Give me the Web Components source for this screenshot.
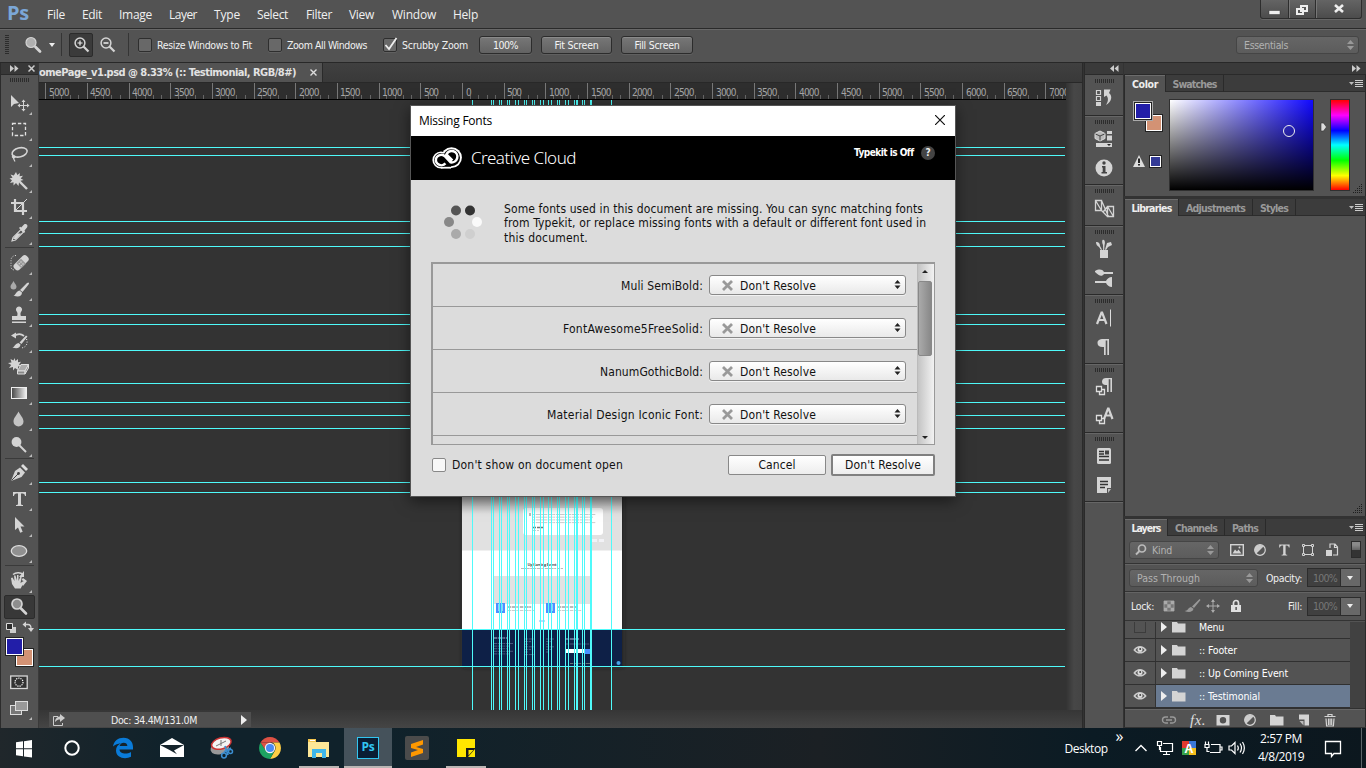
<!DOCTYPE html>
<html lang="en">
<head>
<meta charset="utf-8">
<title>Photoshop</title>
<style>
html,body{margin:0;height:100%;overflow:hidden;background:#333}
</style>
</head>
<body>
<ps-desktop></ps-desktop>
<script>
const TAHOMA = '"DejaVu Sans Condensed","DejaVu Sans",sans-serif';
const SEGOE = '"Open Sans","Noto Sans",sans-serif';

/* Registers an element whose shadow root is cloned from a template. */
function define(name, css, html, ready) {
  const t = document.createElement('template');
  const build = typeof html === 'function' ? html : () => html;
  customElements.define(name, class extends HTMLElement {
    connectedCallback() {
      if (this.shadowRoot) return;
      t.innerHTML = `<style>*{box-sizing:border-box}${css}</style>${build(this)}`;
      this.attachShadow({mode: 'open'}).append(t.content.cloneNode(true));
      if (ready) ready(this);
    }
  });
}

/* Flex cells: [left, width, content]; each cell's gap comes from the previous cell's end. */
function cells(list, start = 0) {
  let p = start;
  return list.map(([x, w, h, s = '']) => {
    const m = x - p; p = x + w;
    return `<div class="c" style="flex:none;display:flex;align-items:center;margin-left:${m}px;width:${w}px;${s}">${h}</div>`;
  }).join('');
}
const text = (s, w) => `<ui-text w="${w}">${s}</ui-text>`;
const icon = (n, w = 22, h = 22) => `<ps-icon name="${n}" w="${w}" h="${h}"></ps-icon>`;

const F = '#d4d4d4';
const sh = '<g fill="none" stroke="#d4d4d4" stroke-width="1.6">';
const ICONS = {
  move: `<path fill="${F}" d="M3 3v12l3-3 5-1z"/><path stroke="${F}" fill="none" d="M15.500 9v9M11 13.500h9"/><path fill="${F}" d="M15.500 7.500l2 2.500h-4zM15.500 19.500l2-2.500h-4zM9.500 13.500l2.500-2v4zM21.500 13.500l-2.500-2v4z"/>`,
  marquee: `<path fill="none" stroke="#e2e2e2" stroke-width="1.300" stroke-dasharray="3.400 2" d="M4.500 5.500h13v12h-13z"/>`,
  lasso: `${sh}<ellipse cx="11.500" cy="8.500" rx="7.700" ry="4.500" transform="rotate(-14 11 8)"/><path d="M5.500 11c-3 2 1 4 1.500 2s-3-1-1 2.500l1 2" stroke-width="1.200"/></g>`,
  wand: `<path fill="${F}" d="M8 2l1.300 3L12 3l-.5 3.300 3.500-.5-2.300 2.700L15.500 10l-3 .8L14 13.500l-3-1L10.500 16 8 13l-2.500 2.500v-3.200L2 13l2-2.700L1.500 8.500l3-.7L2.500 4.500l3.300 1z"/><path stroke="${F}" stroke-width="2.400" d="M12 12l7 7"/>`,
  crop: `<path fill="none" stroke="${F}" stroke-width="2.200" d="M7 3v12h12M3 7h12v12"/><path stroke="${F}" d="M8 14L19 3"/>`,
  eyedropper: `<path fill="none" stroke="${F}" stroke-width="1.200" d="M4 19l1-3.500 8-8 2.500 2.500-8 8z"/><path fill="${F}" d="M11 6l1.200-1.200 1 .7L16 2.500c2-1.500 4.500.7 3 3L16.500 8.500l.6 1.300L16 11zM9 11.500h4L8 17H5z"/>`,
  heal: `<path fill="none" stroke="#ddd" stroke-dasharray="1 1.500" d="M8 3.500c-3 0-5 2-5 5v6c0 2 1 3 3 3.500"/><rect x="4.500" y="7.200" width="17.500" height="7.400" rx="3" transform="rotate(-45 13 11)" fill="${F}"/><path fill="#999" d="M13 6.800l5 5-4.600 4.400-5-5z"/><path fill="#fff" d="M12.500 9.500h1v1h-1zM14.500 11.500h1v1h-1zM10.700 11.300h1v1h-1zM12.700 13.300h1v1h-1z"/>`,
  brush: `<path fill="#aaa" d="M5.500 3c1.500 3 3 4 3 5.500a3 3 0 0 1-6 0C2.500 7 4 6 5.500 3z"/><path fill="${F}" d="M20.500 4.500c1 1 .4 1.500 0 2L14.500 14l-2.500-2 7-7zM11.500 12.500l2.500 2c0 4-4 5-8.500 3 2.500-.5 2-4 6-5z"/>`,
  stamp: `<path fill="${F}" d="M11 2.500a3 3 0 0 1 2.300 5c-1 1.200-1 2.500-.5 4.500H18v4H4v-4h5.200c.5-2 .5-3.300-.5-4.500a3 3 0 0 1 2.300-5zM4 17.500h14v1.500H4z"/>`,
  historybrush: `<path fill="none" stroke="${F}" stroke-width="1.700" d="M6 6c3-2 7-2.500 10 0"/><path fill="${F}" d="M3 5.500l5-3v6zM18 5.500l1.500 1-6 7.500-2-1.500zM10.500 13l2 1.600c0 3.500-4 4.500-8 2.800 2.500-.5 2-3.500 6-4.400z"/><path fill="none" stroke="#eee" stroke-dasharray="1 1.600" d="M18.500 9c2 5-1 9-6 9"/>`,
  eraser: `<path fill="${F}" d="M6.500 2l1 3L10 3v3.200l3-.4L11 8.500l2.500 1.500-3.500.5L10 14l-3-2-2 2.500v-3.400L1 12l2.200-3L0 7l3.500-.5L2.500 3l3 1.500z"/><path fill="#aaa" stroke="#ddd" d="M13 8.500h7.500L17 15H9.500z"/><path fill="#888" stroke="#ddd" d="M20.500 8.500v3.500L17 18v-3zM9.500 15H17v3H9.500z"/>`,
  gradient: `<defs><linearGradient id="g"><stop stop-color="#444"/><stop offset="1" stop-color="#f4f4f4"/></linearGradient></defs><rect x="3.500" y="5.500" width="15" height="11" fill="url(#g)" stroke="#eee"/>`,
  drop: `<path fill="#c4c4c4" d="M10.500 3.500c2 4 5 6.500 5 10a5 5 0 0 1-10 0c0-3.500 3-6 5-10z"/>`,
  dodge: `<circle cx="8.500" cy="8" r="4.900" fill="${F}"/><path stroke="${F}" stroke-width="2" d="M11 11l7 7"/>`,
  pen: `<path fill="${F}" d="M3 19L7 9l5-3.500 5 5L13.500 15z"/><path fill="#ddd" d="M13 4l2-2 5 5-2 2z"/><circle cx="10.500" cy="11.500" r="1.400" fill="#444"/><path stroke="#444" d="M3.500 18.500l6.500-6.500"/>`,
  type: `<path fill="${F}" d="M5 4h13v4h-1c-.3-2-1-2.500-4-2.500v10c0 1.200.5 1.500 2 1.500v1H8v-1c1.500 0 2-.3 2-1.500v-10C7 5.500 6.300 6 6 8H5z"/>`,
  arrow: `<path fill="${F}" d="M7 3l9.500 9.500h-4l2.200 5.300-2.500 1-2.200-5.300L7 16z"/>`,
  ellipse: `<ellipse cx="11" cy="11" rx="7.700" ry="5.400" fill="#909090" stroke="#ddd" stroke-width="1.300"/>`,
  hand: `<path fill="${F}" d="M3 8l1.500-.5L6.500 11 6 5.500h1.500l1.500 5V5h1.500v6l2-4.500h1.300L12.500 13l2.200-1.500 1 1-3 6H7l-3-4.500z"/><path fill="none" stroke="${F}" stroke-width="1.500" d="M5 4.500c3-2.500 8-2 10 0"/><path fill="${F}" d="M16 1v6h-5zM15 8l4 3-4 5-1.500-2 2-3-2-1z"/>`,
  zoom: `<circle cx="9" cy="8" r="5" fill="#8e8e8e" stroke="${F}" stroke-width="1.700"/><path stroke="${F}" stroke-width="2.600" stroke-linecap="round" d="M13 12.500l5 5"/>`,
  loupe: `<circle cx="9" cy="8.500" r="5" fill="#b0b0b0" stroke="${F}" stroke-width="1.200"/><path stroke="${F}" stroke-width="2.800" stroke-linecap="round" d="M13.500 13l4.500 4.500"/>`,
  zoomin: `<circle cx="10" cy="9" r="4.900" fill="none" stroke="${F}" stroke-width="1.500"/><path stroke="#eee" stroke-width="1.200" d="M7.500 9h5M10 6.500v5"/><path stroke="${F}" stroke-width="2.200" d="M13.500 12.500l5 5"/>`,
  zoomout: `<circle cx="10" cy="9" r="4.900" fill="none" stroke="${F}" stroke-width="1.500"/><path stroke="#eee" stroke-width="1.500" d="M7.500 9h5"/><path stroke="${F}" stroke-width="2.200" d="M13.500 12.500l5 5"/>`,
  mini: `<rect x="5" y="7" width="6" height="6" fill="#ccc"/><path fill="#2d2d2d" stroke="#ddd" d="M1.500 3.500h6v6h-6z"/><path fill="none" stroke="${F}" stroke-width="1.300" d="M20 4.500h3c2 0 3 1.500 3 4"/><path fill="${F}" d="M17.500 4.500l3.500-3v6zM26 12l-3-4h6z"/>`,
  quickmask: `<rect x="2.700" y="5" width="16.500" height="12.500" fill="#333" stroke="#d8d8d8" stroke-width="1.300"/><circle cx="11" cy="11.200" r="4" fill="none" stroke="#fff" stroke-width="1.200" stroke-dasharray="1.200 1"/>`,
  screen: `<rect x="2.500" y="8.500" width="11" height="9" fill="#777" stroke="#ddd"/><rect x="7.500" y="4.500" width="12" height="9" fill="#999" stroke="#ddd"/>`,
  history: `<path fill="none" stroke="${F}" stroke-width="1.200" d="M3.500 3.500h4v4h-4zM3.500 9.500h4v4h-4z"/><path fill="${F}" d="M3 15h5v4H3zM11 2.500h6.500L16 6c4 3 2.500 9-3 12 2.500-4 2.500-7 .5-9.500L11 10z"/>`,
  props: `<path fill="#bbb" stroke="#ddd" d="M7 3l5 2.500v5L7 13l-5-2.500v-5z"/><path fill="none" stroke="#444" d="M2.500 6L7 8l4.500-2M7 8v4.500"/><path fill="${F}" d="M14 3h5v3h-5zM14 7.500h5v5h-5zM3 15h16v4H3z"/><path fill="#222" d="M14 16h4l-2 2z"/>`,
  info: `<circle cx="11" cy="11" r="8.500" fill="${F}"/><circle cx="11" cy="6" r="1.700" fill="#444"/><path fill="#444" d="M9 9h3.500v6H14v1.500H8.500V15H9.700v-4.500H9z"/>`,
  libs: `<path fill="none" stroke="${F}" stroke-width="1.300" d="M2.500 3.500h6v10h-6zM14.500 9.500h6v10h-6zM2.500 3.500l6 10M8.500 3.500l7 16M14.500 9.500l-4 5M14.500 9.500l6 10M8.500 13.500l6 6"/>`,
  brushes: `<path fill="${F}" d="M7 12h8v8H7zM9.500 2c2-1 3 2 2 5l-.3 5h-1l-.2-5c-1-2-1-4-.5-5zM3 4c2-.5 4 1 4 4l2 3.500-1 .5-2-3C4 8 3 6 3 4zM14 5l4-1 1 3-4 2-2 3-1-.5z"/>`,
  presets: `<path fill="${F}" d="M2 4c4-2 7-2 9 1h9v2h-9c-2 3-5 2-9-2zM2 14h11c1-2 3-4 6-4v10c-3 0-5-2-6-4H2z"/>`,
  chr: `<path fill="none" stroke="${F}" stroke-width="2.200" d="M4 17L8.500 5.500h.6L13.500 17M5.500 13h7"/><path stroke="#ddd" d="M17.500 2.500v17"/>`,
  para: `<path fill="${F}" d="M16 3v16h-1.700V4.500h-1.600V19H11v-8C7 11.500 4.500 10 4.500 7S7 3 10 3z"/>`,
  parast: `<path fill="${F}" d="M19 2v14h-1.600V3.300h-1.700V16H14V9c-3.500.5-5-1-5-3.500S11 2 13 2z"/><path fill="#555" stroke="#ddd" stroke-width="1.300" d="M6.500 13.500h5v5h-5z"/><path fill="#444" stroke="#ddd" stroke-width="1.300" d="M3.500 10.500h5v5h-5z"/>`,
  chrst: `<path fill="none" stroke="${F}" stroke-width="2.200" d="M11 14l4-10.500h.6L19.500 14M12 10.500h7"/><path fill="#555" stroke="#ddd" stroke-width="1.300" d="M6.500 13.500h5v5h-5z"/><path fill="#444" stroke="#ddd" stroke-width="1.300" d="M3.500 10.500h5v5h-5z"/>`,
  comps: `<rect x="4" y="3" width="14" height="16" rx="1.500" fill="${F}"/><path stroke="#333" stroke-width="1.500" d="M6 6.500h5M6 9h5M6 11.500h10M6 15h10"/><path fill="#444" d="M12 5.500h4v4h-4z"/>`,
  notes: `<path fill="${F}" d="M4 3h14v11h-4v5H4z"/><path fill="#bbb" d="M15 15h3l-3 4z"/><path stroke="#333" stroke-width="1.300" d="M7 7.500h8M7 10.500h8M7 13.500h5"/>`,
  image: `<rect x="4.700" y="5.700" width="12.600" height="10.600" fill="#555" stroke="${F}" stroke-width="1.400"/><path fill="${F}" d="M6.500 14.500l2.500-4 2 2 1.500-2 3 4z"/><circle cx="13.500" cy="8.500" r="1" fill="${F}"/>`,
  adjust: `<circle cx="11" cy="11" r="5.300" fill="#555" stroke="${F}" stroke-width="1.200"/><path fill="#ccc" d="M7.200 14.800A5.300 5.300 0 0 1 14.800 7.200z"/>`,
  shape: `<path fill="none" stroke="${F}" d="M7 6.500h8M7 15.500h8M6.500 8v6M15.500 8v6"/><path fill="#555" stroke="${F}" d="M5.500 5.500h2v2h-2zM14.500 5.500h2v2h-2zM5.500 14.500h2v2h-2zM14.500 14.500h2v2h-2z"/>`,
  smart: `<path fill="none" stroke="${F}" stroke-width="1.200" d="M9 9V5h5l2.500 3v8H12M13.500 5v3.500h3"/><path fill="${F}" d="M5 11h6v6H5z"/>`,
  checker: `<path fill="#777" stroke="#999" d="M6 6h10v10H6z"/><path fill="#aaa" d="M6 6h3.300v3.300H6zM12.700 6H16v3.300h-3.300zM9.300 9.300h3.400v3.400H9.300zM6 12.700h3.300V16H6zM12.700 12.700H16V16h-3.300z"/>`,
  lbrush: `<path fill="#999" d="M18.500 4l1 1-6.500 8-2-1.500zM10 12l2.500 1.800c-.5 3.500-5 3.700-9 2.200C7 16 6.500 13 10 12z"/>`,
  lmove: `<path stroke="#aaa" d="M11 5v12M5 11h12"/><path fill="#aaa" d="M11 4l2 3H9zM11 18l2-3H9zM4 11l3-2v4zM18 11l-3-2v4z"/>`,
  lock: `<path fill="none" stroke="#e0e0e0" stroke-width="1.700" d="M8.500 11V8a2.500 2.500 0 0 1 5 0v3"/><path fill="#e0e0e0" d="M6 10h10v7H6z"/><path fill="#333" d="M10.500 12h1.200v3h-1.200z"/>`,
  link: `<path fill="none" stroke="#999" stroke-width="1.400" d="M10 8H7.500a3 3 0 0 0 0 6H10M12 8h2.500a3 3 0 0 1 0 6H12M8 11h6"/>`,
  mask: `<path fill="${F}" fill-rule="evenodd" d="M4.500 6h13v10.500h-13zM11 8a3.200 3.200 0 1 0 0 6.400A3.200 3.200 0 1 0 11 8z"/>`,
  folder: `<path fill="${F}" d="M4 6h5l1 1.500h7.500v9H4z"/>`,
  newl: `<path fill="${F}" d="M6 5.500h10v11h-4.500v-6H6z"/><path fill="#bbb" d="M6.500 12h4v4.500z"/>`,
  trash: `<path fill="none" stroke="${F}" stroke-width="1.200" d="M5.500 7.500h11M9 7V5.500h4V7M7 9.500l.6 7.500h6.800L15 9.500M9.500 9.500V16M11.100 9.500V16M12.700 9.500V16"/>`,
  eye: `<path fill="none" stroke="#ccc" stroke-width="1.500" d="M5.300 11c3-4.500 8.400-4.500 11.400 0-3 3.800-8.400 3.800-11.400 0z"/><circle cx="11" cy="10.500" r="2.500" fill="#ddd"/><circle cx="11.200" cy="10" r="1" fill="#444"/>`,
  share: `<path fill="none" stroke="#ccc" d="M10 6.500H5.500v9h9V13"/><path fill="#ccc" d="M12 4l5 4-5 4V9.500c-2 0-3 .5-5 2.500 0-3 2-5.500 5-5.500z"/>`,
  cc: `<g fill="#fff"><circle cx="19.500" cy="10.600" r="10.400"/><circle cx="9" cy="13" r="8.600"/><path d="M9 10h10v11.600H9z"/></g><g fill="#000"><circle cx="19.500" cy="10.800" r="8.500"/><circle cx="9" cy="13" r="6.900"/><path d="M9 10h10v9.800H9z"/></g><path fill="none" stroke="#fff" stroke-width="2.500" d="M13.400 16.400a5.400 5.200 0 1 1-.8-7.400l6 6.300a5.700 5.700 0 1 0-4.200-7.800l6 6"/>`,
  win: `<path fill="#fff" d="M3 5.300l7-1v7H3zM11 4.200l8-1.200v8.300h-8zM3 12.300h7v7l-7-1zM11 12.300h8v8.300l-8-1.200z"/>`,
  ring: `<circle cx="11" cy="11" r="6.700" fill="none" stroke="#fff" stroke-width="2"/>`,
  edge: `<path fill="#0a7bd8" d="M1 9.500C2 4 6 .8 11.500.8 18 .8 21 5.500 21 10v2.500H7.500c.2 4 6.500 5.500 11.500 2.500v4.700c-5.500 3-15 1.500-15-6.200 0-3.500 2-6 5-7.200C6 7 3 7.500 1 9.500zM7.600 9h7.800c0-4.500-7-4.500-7.800 0z"/>`,
  mail: `<path fill="#fff" d="M0 8L12 1l12 7v12H0z"/><path fill="#15242c" d="M0 8h24l-10 5.500 3 3.700-7-4z"/>`,
  snip: `<ellipse cx="10" cy="11" rx="9.500" ry="6" transform="rotate(-15 11 8)" fill="#999"/><ellipse cx="12.500" cy="6.500" rx="10" ry="5.500" transform="rotate(-15 12 7)" fill="#f4f4f4" stroke="#c33" stroke-width="1.500"/><path stroke="#777" d="M7 9l10-5M12 3v6"/><path fill="none" stroke="#3b8ed0" stroke-width="1.800" d="M16 9l3 9M22 11l-7 4"/><circle cx="15" cy="18.500" r="2.400" fill="none" stroke="#3b8ed0" stroke-width="1.500"/><circle cx="21.500" cy="14.500" r="2" fill="none" stroke="#3b8ed0" stroke-width="1.500"/>`,
  chrome: `<path fill="#dd5144" d="M1.500 5.500A11 11 0 0 1 20.500 5.500H11z"/><path fill="#ffce45" d="M20.500 5.500A11 11 0 0 1 11 22l5-8.500c1.500-3 0-7-3-8z"/><path fill="#1da362" d="M1.500 5.500A11 11 0 0 0 11 22l4.500-8C12 17 8 15 6.500 13z"/><path fill="#dd5144" d="M1.500 5.500L6.500 13 7 8l4-2.500z"/><circle cx="11" cy="11" r="5.200" fill="#f4f4f4"/><circle cx="11" cy="11" r="4" fill="#4a8af4"/>`,
  explorer: `<path fill="#f5c64f" d="M0 2h8v3h13v4H0z"/><path fill="#fde797" d="M0 5h21v15H0z"/><path fill="#3fb6ea" d="M4 21v-9h14v9h-4v-5H8v5z"/><path fill="#fff" d="M2 3h5v1H2z"/>`,
  sublime: `<rect width="24" height="24" rx="2" fill="#4b4b4b"/><path fill="#ff9800" d="M6 8l12-4v4.500L11 11l7 2v4L6 21v-4.500l7-2.500-7-2z"/>`,
  sticky: `<path fill="#ffe600" d="M1 2h18v18H1z"/><path fill="#17191c" d="M10 11h9v1l-7 8h-2z"/><path fill="#ffe600" d="M12.500 13h5l-5 5.500z"/>`,
  chev: `<path fill="none" stroke="#fff" stroke-width="1.400" d="M5.500 14l5.500-5.500 5.500 5.500"/>`,
  pc: `<path fill="none" stroke="#fff" stroke-width="1.200" d="M9 6.500h9.500v8H6.500V10M9 17.500h7M12.500 15v2.500M3.500 4.500h4v4h-4zM5.500 9v4"/>`,
  ime: `<path fill="#e2382e" d="M4 4h7v7H4z"/><path fill="#3a78d8" d="M11 4h7v7h-7z"/><path fill="#36a04a" d="M4 11h7v7H4z"/><path fill="#f4bd1c" d="M11 11h7v7h-7z"/><text x="11" y="16" font-family="Liberation Sans" font-weight="bold" font-size="13" fill="#fff" text-anchor="middle">A</text>`,
  batt: `<path fill="none" stroke="#fff" stroke-width="1.200" d="M9 7.500h9v8H8M18.500 10h1.500v3h-1.500M3.500 4.500v3M6.500 4.500v3M3 7.500h4v3H3zM5 10.500v4h2.500"/>`,
  sound: `<path fill="none" stroke="#fff" stroke-width="1.200" d="M3 9h2.500L9 5.500v11L5.500 13H3zM11.500 8.500c1 1.500 1 3.500 0 5M14 6.500c2 3 2 6 0 9M16.500 5c2.500 4 2.500 8 0 12"/>`,
  notif: `<path fill="none" stroke="#fff" stroke-width="1.300" d="M3.500 4.500h15v12H12l-2.500 3v-3h-6z"/>`,
  warn: `<path fill="#ddd" d="M11 5l6 12H5z"/><path stroke="#222" stroke-width="2" d="M11 8.500v4.500M11 14v1.500"/>`,
  search: `<circle cx="12" cy="9.500" r="3.500" fill="none" stroke="#bbb" stroke-width="1.700"/><path stroke="#bbb" stroke-width="2" d="M9.500 12L6 15.500"/>`,
  menu: `<path fill="#bbb" d="M4 9h5l-2.500 3z"/><path stroke="#ccc" stroke-width="1" d="M10 7.500h8M10 9.500h8M10 11.500h8M10 13.500h8"/>`,
  resize: `<path stroke="#1d1d1d" stroke-width="1" stroke-dasharray="1 1" d="M9 1.500h1M7 3.500h3M5 5.500h5M3 7.500h7M1 9.500h9"/>`
};
define('ps-icon', ':host{display:block;flex:none}svg{display:block;overflow:visible}', e =>
  `<svg width="${e.getAttribute('w') || 22}" height="${e.getAttribute('h') || 22}" viewBox="0 0 ${e.getAttribute('w') || 22} ${e.getAttribute('h') || 22}">${ICONS[e.getAttribute('name')] || ''}</svg>`);

define('ps-grip', ':host{display:block;height:4px;width:19px;background:repeating-linear-gradient(90deg,#2c2c2c 0 1px,#535353 1px 2px)}', '');
define('ps-check', `:host{display:block;width:14px;height:14px;border:1px solid #2e2e2e;border-radius:2px;background:#686868;box-shadow:0 1px #606060}svg{display:block;overflow:visible}`,
  e => e.hasAttribute('on') ? '<svg width="12" height="12"><path fill="none" stroke="#eee" stroke-width="1.800" d="M1.500 6l3.500 4L12.500-1"/></svg>' : '');
define('ps-button', `:host{display:flex;align-items:center;justify-content:center;width:100%;height:18px;border:1px solid #2c2c2c;border-radius:3px;background:linear-gradient(#777,#626262);box-shadow:inset 0 1px #8a8a8a,0 1px #606060;color:#f4f4f4}`, '<slot></slot>');
define('ps-select', `:host{display:flex;align-items:center;width:100%;height:18px;padding:0 4px 0 7px;border:1px solid #454545;border-radius:3px;background:linear-gradient(#666,#5c5c5c);color:#b2b2b2}svg{margin-left:auto}`,
  '<slot></slot><svg width="7" height="10"><path fill="#999" d="M3.500 0L7 4H0zM3.500 10L7 6H0z"/></svg>');

/* ---------- top bars ---------- */
define('ps-menubar', `:host{display:flex;height:28px;background:#535353;color:#f0f0f0;font:12px ${SEGOE};align-items:center}
.logo{font:bold 20px ${SEGOE};color:#7ba7d7;height:28px;line-height:26px}
.win{align-self:flex-start;height:19px;border:1px solid #2d2d2d;border-top:0;border-radius:0 0 3px 3px;background:linear-gradient(#646464,#4c4c4c);box-shadow:0 1px #666}
svg{display:block}`, () => cells([
  [7, 24, `<div class="logo">${text('Ps', 22)}</div>`],
  [47, 20, text('File', 18)], [82, 22, text('Edit', 20)], [119, 34, text('Image', 33)], [169, 30, text('Layer', 28)],
  [214, 28, text('Type', 26)], [257, 34, text('Select', 31)], [306, 28, text('Filter', 26)], [349, 28, text('View', 25)],
  [392, 46, text('Window', 44)], [453, 30, text('Help', 25)]]) +
  `<div class="win" style="margin-left:auto;margin-right:4px;width:102px"><svg width="100" height="18"><path stroke="#2d2d2d" d="M27.500 0v18M54.500 0v18"/><path stroke="#777" d="M28.500 0v18M55.500 0v18"/><path fill="#eee" stroke="#333" stroke-width=".5" d="M8 10.500h11v4H8z"/><path fill="none" stroke="#eee" stroke-width="2" d="M40 6h6v5h-6zM36 9h6v5h-6z"/><path stroke="#eee" stroke-width="2.600" d="M74 5l8 7M82 5l-8 7"/></svg></div>`);

define('ps-options', `:host{display:flex;height:35px;background:#535353;border-top:1px solid #2a2a2a;box-shadow:inset 0 1px #686868;align-items:center;font:10.500px ${TAHOMA};color:#f0f0f0;padding-bottom:3px}
.vg{width:4px;height:20px;background:repeating-linear-gradient(#2c2c2c 0 1px,#535353 1px 2px)}.d{width:1px;height:23px;background:#353535}
.on{width:24px;height:24px;border:1px solid #2b2b2b;border-radius:2px;background:#3b3b3b}`, () => cells([
  [5, 4, '<div class="vg"></div>'], [22, 22, icon('loupe')], [49, 8, '<svg width="7" height="4"><path fill="#eee" d="M0 0h6L3 4z"/></svg>'], [61, 1, '<div class="d"></div>'],
  [69, 24, `<div class="on">${icon('zoomin')}</div>`], [96, 22, icon('zoomout')], [128, 1, '<div class="d"></div>'],
  [138, 14, '<ps-check></ps-check>'], [157, 98, text('Resize Windows to Fit', 95)],
  [268, 14, '<ps-check></ps-check>'], [287, 84, text('Zoom All Windows', 80)],
  [383, 14, '<ps-check on></ps-check>'], [402, 70, text('Scrubby Zoom', 66)],
  [479, 53, `<ps-button>${text('100%', 25)}</ps-button>`], [541, 71, `<ps-button>${text('Fit Screen', 44)}</ps-button>`], [621, 72, `<ps-button>${text('Fill Screen', 45)}</ps-button>`],
  [1236, 123, `<ps-select>${text('Essentials', 44)}</ps-select>`]]));

/* ---------- toolbox ---------- */
define('ps-tool', `:host{display:grid;place-items:center;position:relative;width:31px;height:26px;flex:none}
:host([on]) .b{background:#383838;border-color:#2c2c2c}.b{width:31px;height:24px;border:1px solid transparent;border-radius:2px;display:grid;place-items:center}
:host([more])::after{content:"";position:absolute;right:3px;bottom:1px;border:solid transparent;border-width:0 0 3.500px 3.500px;border-bottom-color:#bbb}`,
  e => `<div class="b">${icon(e.getAttribute('name'))}</div>`);
define('ps-toolbox', `:host{display:flex;flex-direction:column;width:39px;background:#535353;border-left:1px solid #2c2c2c;border-right:1px solid #3a3a3a;padding-right:1px;align-items:center;flex:none;box-sizing:border-box}
.h{align-self:stretch;height:12px;background:#383838;display:flex;justify-content:space-between;align-items:center;padding:0 3px 0 9px;border-bottom:1px solid #2a2a2a;flex:none;margin-right:-1px}
ps-grip{margin:3px 0 8px;flex:none}.d{width:29px;height:1px;background:#3a3a3a;margin:1px 0 1.500px;flex:none}
.colors{position:relative;width:29px;height:30px;margin:0 0 2px;flex:none}.sw{position:absolute;width:19px;height:19px;border:1px solid #222;box-shadow:inset 0 0 0 1px #fff}
.f{left:0;top:0;background:#221ea8}.bk{right:0;bottom:0;background:#d39274}`,
  () => {
    const t = (n, m = true) => `<ps-tool name="${n}"${m ? ' more' : ''}></ps-tool>`;
    return `<div class="h"><svg width="9" height="7"><path fill="#ccc" d="M0 0l4 3.500L0 7zM4.500 0l4 3.500-4 3.500z"/></svg><svg width="7" height="7"><path stroke="#ccc" stroke-width="1.500" d="M.5.5l6 6M6.500.5l-6 6"/></svg></div><ps-grip></ps-grip>`
      + ['move', 'marquee', 'lasso', 'wand', 'crop', 'eyedropper'].map(n => t(n)).join('') + '<div class="d"></div>'
      + ['heal', 'brush', 'stamp', 'historybrush', 'eraser', 'gradient', 'drop', 'dodge'].map(n => t(n)).join('') + '<div class="d" style="margin:.5px 0 1px"></div>'
      + ['pen', 'type', 'arrow', 'ellipse'].map(n => t(n)).join('') + '<div class="d"></div>' + t('hand')
      + `<ps-tool name="zoom" on></ps-tool>${icon('mini', 29, 17)}<div class="colors"><div class="sw bk"></div><div class="sw f"></div></div>`
      + t('quickmask', false) + t('screen');
  });

/* ---------- document window ---------- */
define('ps-ruler', `:host{display:block;height:17px;background:#2e2e2e;border-bottom:1px solid #000}svg{display:block}text{font:10px ${TAHOMA};fill:#a5a5a5}`, () => {
  let s = '', m = '';
  for (let k = -10; k <= 14; k++) {
    const x = Math.floor(423 + k * 41.667 + .4);
    s += `M${x}.500 0v16`;
    for (let j = 1; j < 5; j++) m += `M${Math.floor(423 + (k + j / 5) * 41.667)}.500 12v4`;
  }
  let t = '';
  for (let k = -10; k <= 14; k++) {
    const v = String(Math.abs(k) * 500), w = v.length === 4 ? 20.5 : v.length === 3 ? 15 : 5.5;
    t += `<text x="${Math.floor(423 + k * 41.667) + 4}" y="13" textLength="${w}">${v}</text>`;
  }
  return `<svg width="1027" height="16"><path stroke="#777" d="${s}"/><path stroke="#666" d="${m}"/>${t}</svg>`;
});
define('ps-canvas', ':host{display:block;height:610px;background:#333;overflow:hidden}svg{display:block}', () => {
  const H = [147, 155, 221, 233, 246, 314, 324, 350, 383, 402, 415, 428, 482, 492, 629, 666];
  const V = [472, 491, 493, 499, 501, 507, 509, 515, 518, 524, 526, 532, 534, 540, 543, 548, 551, 557, 559, 565, 568, 574, 576, 577, 582, 584, 590, 591, 611];
  const lines = (x, y, w, n, step, c) => Array.from({length: n}, (_, i) => `<path stroke="${c}" stroke-dasharray="3 .7 5 .5 2 .8" d="M${x} ${y + i * step}h${w - (i % 3) * 3}"/>`).join('');
  return `<svg width="1027" height="610" viewBox="39 100 1027 610">
<defs><filter id="b" x="-10%" y="-10%" width="120%" height="120%"><feGaussianBlur stdDeviation="2"/></filter>
<linearGradient id="s" x2="0" y2="1"><stop stop-color="#000" stop-opacity=".25"/><stop offset="1" stop-color="#000" stop-opacity="0"/></linearGradient></defs>
<path fill="#222" filter="url(#b)" d="M463 400h160v267H463z"/>
<path fill="#fff" d="M462 400h160v266H462z"/><path fill="#e1e1e1" d="M462 400h160v150.500H462z"/>
<rect x="523" y="508" width="80" height="27" rx="3" fill="#fff"/>${lines(532, 514.5, 64, 4, 2.7, '#ccc')}
<path stroke="#777" stroke-width="1.300" stroke-dasharray="3 1" d="M533 527.500h12"/><path stroke="#ccc" stroke-dasharray="3 1" d="M533 530.500h6"/><path stroke="#bbb" stroke-width="2" d="M530 513v3"/>
<path stroke="#f2f2f6" stroke-width="3" d="M592 540.500h5M599 540.500h5"/>
<text x="527.500" y="565.500" textLength="29" font-family="Open Sans" font-weight="bold" font-size="4" fill="#555">Up Coming Event</text>${lines(521, 568.5, 42, 1, 2, '#bbb')}
<path fill="#e2e2e2" d="M494 576h97v28h-97z"/><path fill="#4a92ff" d="M496 603h9v10h-9zM546 603h9v10h-9z"/>
<path stroke="#9cc6ff" d="M498.500 604v7M502.500 604v7M548.500 604v7M552.500 604v7"/>
${lines(508, 607, 24, 1, 1, '#777')}${lines(508, 610.5, 27, 1, 1, '#ccc')}${lines(558, 607, 18, 1, 1, '#777')}${lines(558, 610.5, 24, 1, 1, '#ccc')}
<path fill="#b8dcff" d="M539 620h6v2h-6z"/>
<path fill="#0e2047" d="M462 629h160v37H462z"/>
${lines(494, 638, 13, 1, 1, '#aab8d8')}${lines(494, 643.5, 19, 5, 2.6, '#47557a')}${lines(525, 639, 9, 7, 2.6, '#47557a')}${lines(546, 639, 8, 6, 2.6, '#47557a')}${lines(566, 639, 13, 1, 2, '#aab8d8')}${lines(566, 644, 25, 1, 2, '#47557a')}
<path fill="#fff" d="M566 649h19v4h-19z"/><path fill="#4a92ff" d="M585 649h6v5h-6z"/>${lines(570, 663.5, 20, 1, 1, '#677')}<circle cx="618.500" cy="663" r="2" fill="#46a4e8"/>
<path fill="url(#s)" d="M462 496h160v18H462z"/>
<path stroke="#4ffafa" d="${H.map(y => `M39 ${y}.500h1026`).join('')}${V.map(x => `M${x}.500 100v610`).join('')}"/></svg>`;
});
define('ps-document', `:host{display:flex;flex-direction:column;width:1044px;box-sizing:border-box;background:#3a3a3a;border-right:1px solid #2a2a2a;font:10.500px ${TAHOMA};color:#f0f0f0;flex:none}
.tabs{height:20px;display:flex;border-bottom:1px solid #282828;background:linear-gradient(#404040,#393939);flex:none}
.tab{width:284px;background:#535353;border-right:1px solid #2a2a2a;display:flex;align-items:center;overflow:hidden;font-weight:bold;font-size:11px;color:#e2e2e2}
.tab svg{margin-left:14px}.area{display:flex;height:627px}.view{width:1027px;overflow:hidden;flex:none}.sb{flex:1;background:linear-gradient(90deg,#333,#474747 50%,#444)}
.status{height:18px;display:flex;background:linear-gradient(#363636,#454545);padding:2px 0 1px 10px}.box{width:202px;background:#4f4f4f;display:flex;align-items:center}`,
  () => `<div class="tabs"><div class="tab">${text('omePage_v1.psd @ 8.33% (:: Testimonial, RGB/8#)', 257)}<svg width="7" height="7"><path stroke="#ddd" stroke-width="1.400" d="M.5.5l6 6M6.500.5l-6 6"/></svg></div></div>
<div class="area"><div class="view"><ps-ruler></ps-ruler><ps-canvas></ps-canvas></div><div class="sb"></div></div>
<div class="status"><div class="box">${cells([[-1, 18, icon('share', 18, 20)], [62, 90, text('Doc: 34.4M/131.0M', 86)], [192, 8, '<svg width="7" height="10"><path fill="#eee" d="M0 0l6 5-6 5z"/></svg>']])}</div></div>`);

/* ---------- right-hand dock ---------- */
define('ps-strip', `:host{display:flex;flex-direction:column;width:39px;box-sizing:border-box;background:#535353;border-left:1px solid #2a2a2a;margin-left:1px;flex:none}
.g{border-bottom:1px solid #2a2a2a;box-shadow:0 1px #666;padding:4px 0 0;display:flex;flex-direction:column;align-items:center;flex:none}
.g ps-icon{margin-top:7px}.g ps-grip+ps-icon{margin-top:4px}.h{height:12px;background:#3a3a3a;border-bottom:1px solid #2a2a2a;display:flex;justify-content:flex-end;padding:2px 4px 0 0;flex:none}`, () => {
  const g = (h, ...n) => `<div class="g" style="height:${h}px"><ps-grip></ps-grip>${n.map(i => icon(i)).join('')}</div>`;
  return '<div class="h"><svg width="9" height="7"><path fill="#ccc" d="M4 0L0 3.500 4 7zM8.500 0l-4 3.500 4 3.500z"/></svg></div>' +
    g(41, 'history') + g(69, 'props', 'info') + g(41, 'libs') + g(69, 'brushes', 'presets') + g(69, 'chr', 'para') + g(69, 'parast', 'chrst') + g(69, 'comps', 'notes');
});
define('ps-panel', `:host{display:flex;flex-direction:column;background:#535353;border:1px solid #2a2a2a;border-width:0 1px;flex:none}
.t{display:flex;height:17px;background:#3c3c3c;flex:none;font:bold 10.500px ${TAHOMA};color:#999;border-bottom:1px solid #2c2c2c}
.t .c{height:17px;justify-content:center;border-right:1px solid #2a2a2a}.t .c:first-child{background:#535353;color:#eee;box-shadow:inset 0 1px #6c6c6c}
.m{margin-left:auto;align-self:center}`, e => {
  const tabs = JSON.parse(e.getAttribute('tabs'));
  return `<div class="t">${tabs.map(([n, w, tw]) => `<div class="c" style="display:flex;align-items:center;width:${w}px">${text(n, tw)}</div>`).join('')}<div class="m">${icon('menu', 20, 20)}</div></div><slot></slot>`;
});
define('ps-color', `:host{display:flex;box-sizing:border-box;height:104px;padding:7px 0 0 8px}
.l{width:36px;padding-top:2px}.s{position:relative;width:30px;height:31px}.a,.z{position:absolute;width:20px;height:20px;border:1px solid #aaa;box-shadow:inset 0 0 0 1px #222,inset 0 0 0 2px #fff}
.a{left:0;top:0;background:#221ea8}.z{right:0;bottom:0;width:18px;height:18px;border-color:#222;box-shadow:inset 0 0 0 1px #fff;background:#d39274}
.w{display:flex;margin:18px 0 0 -5px;align-items:center;height:22px}.w i{width:13px;height:13px;margin-left:1px;flex:none;border:1px solid #222;box-shadow:inset 0 0 0 1px #fff;background:#333a96}
.f{width:145px;height:92px;border:1px solid #303030;background:linear-gradient(transparent,#000),linear-gradient(90deg,#fff,#1109ff);position:relative;flex:none}
.f b{position:absolute;left:113px;top:25px;width:12px;height:12px;border:1.500px solid #eee;border-radius:50%}
.k{margin:23px 0 0 6px;width:8px;height:10px}.h{margin-left:2px;width:20px;height:92px;border:1px solid #303030;background:linear-gradient(red,#f0f 17%,#00f 34%,#0ff 50%,#0f0 67%,#ff0 84%,red)}
.r{margin:auto 2px 2px auto}`,
  `<div class="l"><div class="s"><div class="z"></div><div class="a"></div></div><div class="w">${icon('warn', 20, 22)}<i></i></div></div><div class="f"><b></b></div><svg class="k"><path fill="#ddd" stroke="#333" stroke-width=".6" d="M1 1h2.500l3 4-3 4H1z"/></svg><div class="h"></div><div class="r">${icon('resize', 11, 11)}</div>`);
define('ps-layer', `:host{display:flex;box-sizing:border-box;width:225px;height:23px;border-bottom:1px solid #303030;background:#535353;flex:none;font:10.500px ${TAHOMA};color:#fff}
.e{width:31px;border-right:1px solid #333;display:grid;place-items:center;flex:none}.n{flex:1;display:flex;align-items:center;padding-left:5px}:host([sel]) .n{background:#6a7b92}
.n svg{flex:none}.box{width:12px;height:12px;border:1px solid #3c3c3c}ps-icon{margin:0 4px 0 1px}.e ps-icon{margin:0}.n ui-text{margin-left:5px}`,
  e => `<div class="e">${e.hasAttribute('off') ? '<div class="box"></div>' : icon('eye')}</div><div class="n"><svg width="6" height="10"><path fill="#eee" d="M0 0l6 5-6 5z"/></svg>${icon('folder')}${text(e.getAttribute('label'), e.getAttribute('tw'))}</div>`);
define('ps-layers', `:host{display:flex;flex-direction:column;box-sizing:border-box;height:191px;font:10.500px ${TAHOMA};color:#eee}
.r{display:flex;align-items:center;border-bottom:1px solid #333;box-shadow:0 1px #646464;flex:none}
.tg{width:10px;height:17px;border:1px solid #2b2b2b;background:linear-gradient(#8a8a8a 0 20%,#666 50%,#333 50%)}
.in{width:54px;height:19px;border:1px solid #2c2c2c;background:#404040;color:#777;display:flex;align-items:center;padding-left:5px}
.in i{margin-left:auto;width:20px;height:17px;border-left:1px solid #2c2c2c;background:#686868;display:grid;place-items:center}
.list{height:86px;background:#414141;overflow:hidden;display:flex;flex-direction:column;justify-content:flex-end;margin-top:1px;flex:none}
.bar{display:flex;align-items:center;border-top:1px solid #303030;box-shadow:inset 0 1px #666;flex:1}.fx{font:italic 15px "Liberation Serif",serif;color:#ddd}`, () => {
  const input = `<div class="in">${text('100%', 24)}<i><svg width="7" height="4"><path fill="#eee" d="M0 0h6L3 4z"/></svg></i></div>`;
  return `<div class="r" style="height:28px">${cells([[4, 90, `<ps-select style="padding-left:0;box-sizing:border-box">${icon('search')}${text('Kind', 20)}</ps-select>`], [101, 22, icon('image')], [124, 22, icon('adjust')], [148, 22, icon('type', 22, 22), 'transform:scale(.8)'], [172, 22, icon('shape')], [196, 22, icon('smart')], [226, 10, '<div class="tg"></div>']])}</div>
<div class="r" style="height:28px">${cells([[4, 129, `<ps-select>${text('Pass Through', 63)}</ps-select>`], [141, 38, text('Opacity:', 36)], [182, 54, input]])}</div>
<div class="r" style="height:29px;box-shadow:none">${cells([[6, 25, text('Lock:', 23)], [33, 22, icon('checker')], [56, 22, icon('lbrush')], [77, 22, icon('lmove')], [100, 22, icon('lock')], [163, 16, text('Fill:', 14)], [182, 54, input]])}</div>
<div class="list"><ps-layer off label="Menu" tw="25"></ps-layer><ps-layer label=":: Footer" tw="38"></ps-layer><ps-layer label=":: Up Coming Event" tw="89"></ps-layer><ps-layer sel label=":: Testimonial" tw="61"></ps-layer></div>
<div class="bar">${cells([[33, 22, icon('link')], [65, 20, '<span class="fx">' + text('fx.', 16) + '</span>'], [87, 22, icon('mask')], [114, 22, icon('adjust')], [141, 22, icon('folder')], [168, 22, icon('newl')], [194, 22, icon('trash')]])}</div>`;
});
define('ps-dock', `:host{display:flex;flex-direction:column;box-sizing:border-box;width:243px;background:#333;padding-left:1px;flex:none}
.h{height:12px;background:#3a3a3a;border-bottom:1px solid #2a2a2a;display:flex;justify-content:flex-end;padding:2px 5px 0 0;flex:none}
.lib{height:300px;display:flex;align-items:flex-end;justify-content:flex-end;padding:0 2px 2px 0}`,
  `<div class="h"><svg width="9" height="7"><path fill="#ccc" d="M0 0l4 3.500L0 7zM4.500 0l4 3.500-4 3.500z"/></svg></div>
<ps-panel tabs='[["Color",41,26],["Swatches",58,44]]'><ps-color></ps-color></ps-panel>
<ps-panel style="margin-top:3px" tabs='[["Libraries",54,40],["Adjustments",74,59],["Styles",43,28]]'><div class="lib">${icon('resize', 11, 11)}</div></ps-panel>
<ps-panel style="margin-top:3px" tabs='[["Layers",43,29],["Channels",57,42],["Paths",41,26]]'><ps-layers></ps-layers></ps-panel>`);

/* ---------- missing fonts dialog ---------- */
define('font-row', `:host{display:flex;box-sizing:border-box;height:43px;border-bottom:1px solid #999;align-items:center;justify-content:flex-end;padding:1px 11px 0 0;flex:none}
.s{width:197px;height:20px;margin-left:6px;border:1px solid #888;border-radius:3px;background:linear-gradient(#fff,#e9e9e9);box-shadow:0 1px #f2f2f2;display:flex;align-items:center;padding:0 4px 0 12px;margin-top:-1px}
.s svg:last-child{margin-left:auto;margin-top:-1px}ui-text{flex:none}.s ui-text{margin:1px 0 0 7px}`,
  e => `${text(e.getAttribute('label'), e.getAttribute('tw'))}<div class="s"><svg width="11" height="11"><path stroke="#999" stroke-width="2.800" d="M1 1l9 9M10 1l-9 9"/></svg>${text("Don't Resolve", 76)}<svg width="7" height="9"><path fill="#222" d="M3.500 0L6.500 3.500H.5zM3.500 9L6.500 5.500H.5z"/></svg></div>`);
define('font-dialog', `:host{display:flex;flex-direction:column;box-sizing:border-box;width:546px;height:392px;border:1px solid #555;background:#dcdcdc;font:12px ${TAHOMA};color:#111;box-shadow:0 4px 14px rgba(0,0,0,.5)}
.t{height:30px;background:#fff;display:flex;align-items:center;justify-content:space-between;padding:0 10px 2px 8px;font-family:${SEGOE};flex:none;color:#000}
.k{height:44px;background:#000;color:#fff;display:flex;flex:none}.k .c{height:44px}.cc{font:300 17px "Noto Sans",${SEGOE};margin-top:-2px}.tk{font:bold 10px ${TAHOMA}}
.q{width:14px;height:14px;border-radius:50%;background:#444;color:#eee;font:bold 10px/14px ${TAHOMA};text-align:center}
.m{display:flex;height:82px;flex:none}.m svg{margin:24px 19px 0 31px;flex:none}.m div{padding-top:22px;line-height:14.400px}.m ui-text{display:block}
.l{margin-left:20px;width:504px;height:183px;border:2px solid #999;border-width:2px 1px 1px 2px;display:flex;overflow:hidden;flex:none}.rows{width:484px;overflow:hidden}
.sb{width:17px;background:linear-gradient(90deg,#c4c4c4,#f2f2f2);display:flex;flex-direction:column;align-items:center;padding:6px 2px 5px 0;border-left:1px solid #bbb}
.th{width:14px;height:75px;background:linear-gradient(90deg,#aaa,#888);border:1px solid #888;border-radius:2px;margin-top:8px}.sb svg:last-child{margin-top:auto}
.b{display:flex;height:40px;align-items:center}.ck{width:14px;height:14px;border:1px solid #888;border-radius:2px;background:#f8f8f8}
.bt{width:100%;height:20px;border:1px solid #888;border-radius:2px;background:linear-gradient(#fff,#ededed);display:grid;place-items:center}.df{height:22px;border:2px solid #808080}`, () =>
  `<div class="t">${text('Missing Fonts', 73)}<svg width="10" height="10"><path stroke="#111" stroke-width="1.200" d="M0 0l10 10M10 0L0 10"/></svg></div>
<div class="k">${cells([[21, 30, icon('cc', 30, 22)], [60, 110, `<span class="cc">${text('Creative Cloud', 105)}</span>`], [443, 60, `<span class="tk">${text('Typekit is Off', 59)}</span>`, 'align-items:flex-start;padding-top:11px'], [510, 14, '<div class="q">?</div>', 'align-items:flex-start;padding-top:10px']])}</div>
<div class="m"><svg width="43" height="38"><circle cx="14" cy="6.500" r="5" fill="#555"/><circle cx="28" cy="6.500" r="5" fill="#333"/><circle cx="7" cy="18" r="5" fill="#888"/><circle cx="35" cy="18" r="5" fill="#fafafa"/><circle cx="14" cy="30" r="5" fill="#aaa"/><circle cx="28" cy="30" r="5" fill="#cfcfcf"/></svg>
<div>${text('Some fonts used in this document are missing. You can sync matching fonts', 419)}${text('from Typekit, or replace missing fonts with a default or different font used in', 422)}${text('this document.', 84)}</div></div>
<div class="l"><div class="rows"><font-row label="Muli SemiBold:" tw="82"></font-row><font-row label="FontAwesome5FreeSolid:" tw="140"></font-row><font-row label="NanumGothicBold:" tw="103"></font-row><font-row label="Material Design Iconic Font:" tw="156"></font-row></div>
<div class="sb"><svg width="6" height="3"><path fill="#222" d="M0 3h6L3 0z"/></svg><div class="th"></div><svg width="6" height="3"><path fill="#222" d="M0 0h6L3 3z"/></svg></div></div>
<div class="b">${cells([[21, 14, '<div class="ck"></div>'], [41, 175, text("Don't show on document open", 171)], [317, 98, `<div class="bt">${text('Cancel', 37)}</div>`], [420, 104, `<div class="bt df">${text("Don't Resolve", 76)}</div>`]])}</div>`);

/* ---------- taskbar ---------- */
define('win-taskbar', `:host{display:flex;height:40px;background:linear-gradient(90deg,#20272b,#10222b 12%,#10222b 28%,#1b2024 60%,#0b1b24 80%,#0c171e);color:#fff;font:12px ${SEGOE};align-items:center;flex:none}
.c{height:40px;justify-content:center}.ps{width:22px;height:22px;border:1.500px solid #31c5f0;background:#0a1d33;color:#31c5f0;font:bold 12px/18px ${SEGOE};display:flex;justify-content:center}
.clk{display:flex;flex-direction:column;align-items:center;line-height:18px}.end{width:1px;height:40px;background:#5a6468}`, () => {
  const run = 'box-shadow:inset 0 -2px #bab6b4;';
  return cells([[13, 22, icon('win')], [61, 22, icon('ring')], [112, 22, icon('edge')], [160, 24, icon('mail', 24, 22)], [209, 25, icon('snip', 25, 22)], [259, 22, icon('chrome')],
    [299, 40, icon('explorer'), run], [344, 48, `<div class="ps">${text('Ps', 13)}</div>`, run + 'background:#45525b;'], [405, 24, icon('sublime', 24, 24)], [446, 40, icon('sticky', 20, 22), run],
    [1064, 44, text('Desktop', 43)], [1113, 14, '<span style="font-size:16px;margin-top:-3px">' + text('»', 9) + '</span>', 'align-items:flex-start;'],
    [1130, 22, icon('chev')], [1154, 22, icon('pc')], [1178, 22, icon('ime')], [1202, 22, icon('batt')], [1226, 22, icon('sound')],
    [1257, 48, `<div class="clk">${text('2:57 PM', 42)}${text('4/8/2019', 46)}</div>`], [1322, 22, icon('notif')], [1361, 1, '<div class="end"></div>']]);
});

define('ps-desktop', `:host{display:flex;flex-direction:column;width:1366px;height:768px;position:relative;overflow:hidden;background:#535353}
.w{display:flex;height:666px;border-top:1px solid #282828;flex:none;background:#333;margin-top:-1px;overflow:hidden}
font-dialog{position:absolute;left:410px;top:105px}`,
  '<ps-menubar></ps-menubar><ps-options></ps-options><div class="w"><ps-toolbox></ps-toolbox><ps-document></ps-document><ps-strip></ps-strip><ps-dock></ps-dock></div><win-taskbar></win-taskbar><font-dialog></font-dialog>');

/* Single-line label tracked so that it fills its nominal width. */
define('ui-text', ':host{display:inline-block;white-space:pre;text-align:left}span{display:inline-block}', '<span><slot></slot></span>', e => {
  const w = +e.getAttribute('w'), n = e.textContent.length;
  const natural = e.shadowRoot.querySelector('span').getBoundingClientRect().width;
  if (w && natural) {
    e.style.letterSpacing = (w - natural) / n + 'px';
    e.style.width = w + 'px';
  }
});
</script>
</body>
</html>
